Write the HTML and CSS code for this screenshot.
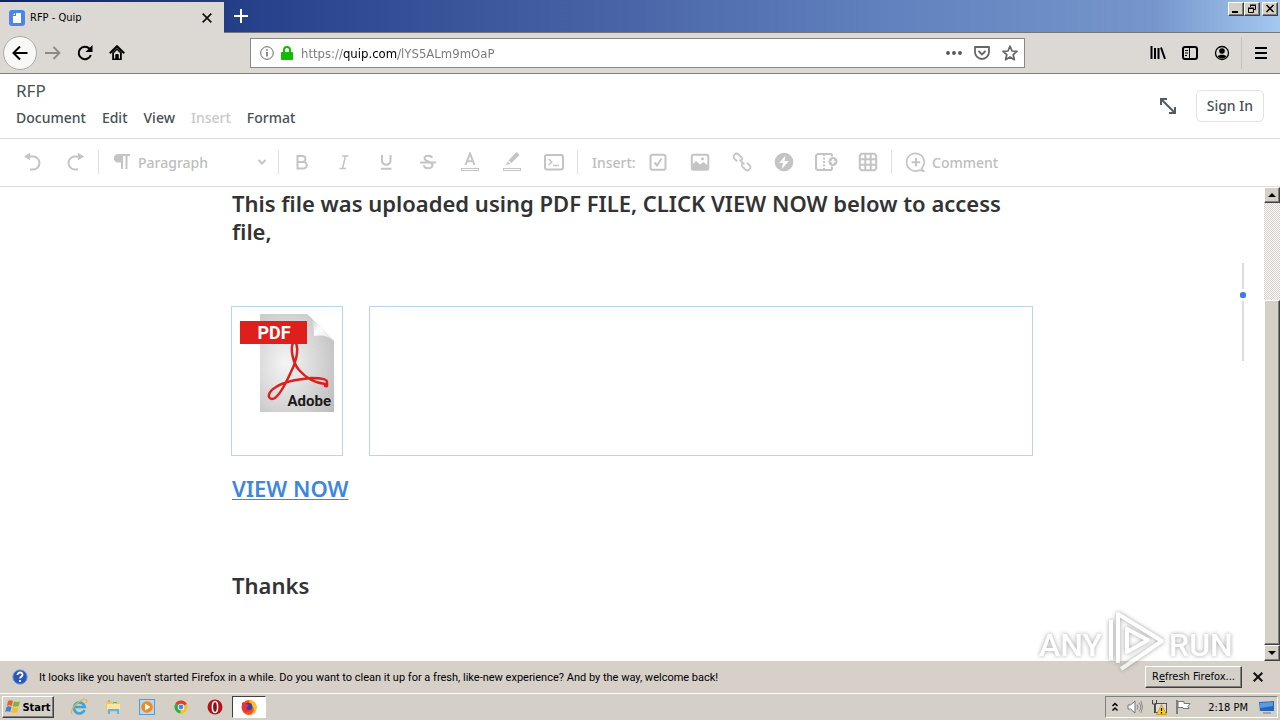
FILE: index.html
```html
<!DOCTYPE html>
<html lang="en">
<head>
    <meta charset="UTF-8">
    <meta name="viewport" content="width=device-width, initial-scale=1.0">
    <title>RFP - Quip</title>
    <link rel="stylesheet" href="styles.css">
</head>
<body>
    <header class="titlebar">
        <div class="tab">
            <svg width="16" height="16" viewBox="0 0 16 16"><rect width="16" height="16" rx="3" fill="#4a86e8"/><path d="M7 3h5v10H4V6h3z" fill="#fff"/><path d="M4 5l2-2v2z" fill="#fff"/></svg>
            <span class="tab-title">RFP - Quip</span>
            <button class="plain" aria-label="Close tab"><svg width="10" height="10" viewBox="0 0 10 10"><path d="M.7.7l8.6 8.6M9.300.7L.7 9.300" stroke="#111" stroke-width="1.700"/></svg></button>
        </div>
        <button class="plain new-tab" aria-label="New tab"><svg width="14" height="14" viewBox="0 0 14 14"><path d="M7 0v14M0 7h14" stroke="#fff" stroke-width="2"/></svg></button>
        <div class="window-buttons">
            <button aria-label="Minimize"><svg width="10" height="10" viewBox="0 0 10 10"><path d="M1 8h6" stroke="#000" stroke-width="2"/></svg></button>
            <button aria-label="Restore"><svg width="10" height="10" viewBox="0 0 10 10"><path d="M3.500 3V1.500h5v4H7M3 1h6M1.500 4.500h5v4h-5zM1 4h6" fill="none" stroke="#000"/></svg></button>
            <button class="win-close" aria-label="Close"><svg width="10" height="10" viewBox="0 0 10 10"><path d="M1.500 1l7 7M8.500 1l-7 7" stroke="#000" stroke-width="1.500"/></svg></button>
        </div>
    </header>

    <nav class="navbar">
        <div class="nav-buttons">
            <button class="plain back" aria-label="Back"><svg width="16" height="16" viewBox="0 0 16 16"><path d="M15.500 8H1.500M8 1.500L1.500 8 8 14.500" fill="none" stroke="#000" stroke-width="2"/></svg></button>
            <button class="plain" aria-label="Forward"><svg width="16" height="16" viewBox="0 0 16 16"><path d="M0 8h14.500M8.500 2l6 6-6 6" fill="none" stroke="#8c8a87" stroke-width="1.800"/></svg></button>
            <button class="plain" aria-label="Reload"><svg width="16" height="16" viewBox="0 0 16 16"><path d="M13.800 10A6.200 6.200 0 1 1 12.500 3.800" fill="none" stroke="#000" stroke-width="2"/><path d="M15.500 0v7H8.500z"/></svg></button>
            <button class="plain" aria-label="Home"><svg width="16" height="16" viewBox="0 0 16 16"><path d="M.8 8.300L8 1.200l7.200 7.100" fill="none" stroke="#000" stroke-width="2"/><path d="M3.200 7.500V15h9.600V7.500L8 3z"/><path d="M5 8l3-3 3 3v5.500H9.500V10h-3v3.500H5z" fill="#dcd9d4"/><path d="M6.500 9h3v4.500h-3z"/></svg></button>
        </div>
        <div class="urlbar">
            <svg width="14" height="14" viewBox="0 0 14 14"><circle cx="7" cy="7" r="6.300" fill="none" stroke="#666"/><path d="M7 6v4.500M7 3.200v1.600" stroke="#666" stroke-width="1.500"/></svg>
            <svg width="12" height="14" viewBox="0 0 12 14"><path d="M3 7V4a3 3 0 0 1 6 0v3" fill="none" stroke="#12bc00" stroke-width="2"/><rect y="6" width="12" height="8" rx="1" fill="#12bc00"/></svg>
            <input type="text" aria-label="Address" value="https://quip.com/lYS5ALm9mOaP">
            <button class="plain" aria-label="Page actions"><svg width="16" height="16" viewBox="0 0 16 16"><g fill="#555"><circle cx="2" cy="8" r="1.900"/><circle cx="8" cy="8" r="1.900"/><circle cx="14" cy="8" r="1.900"/></g></svg></button>
            <button class="plain" aria-label="Save to Pocket"><svg width="16" height="16" viewBox="0 0 16 16"><path d="M1 2h14v5a7 7 0 0 1-14 0z" fill="none" stroke="#666" stroke-width="1.800" stroke-linejoin="round"/><path d="M4.500 6L8 9.500 11.500 6" fill="none" stroke="#666" stroke-width="1.800"/></svg></button>
            <button class="plain" aria-label="Bookmark"><svg width="16" height="16" viewBox="0 0 16 16"><path d="M8 1.200l2 4.800 5 .4-3.800 3.300 1.200 5L8 12l-4.400 2.700 1.200-5L1 6.400 6 6z" fill="none" stroke="#666" stroke-width="1.700" stroke-linejoin="round"/></svg></button>
        </div>
        <div class="nav-tools">
            <button class="plain" aria-label="Library"><svg width="16" height="16" viewBox="0 0 16 16"><path d="M1.500 1v13M5 3v11M8.500 3v11M11 2.500L15 14" stroke="#000" stroke-width="2"/></svg></button>
            <button class="plain" aria-label="Sidebars"><svg width="16" height="16" viewBox="0 0 16 16"><rect x="1" y="2" width="14" height="12" rx="2" fill="none" stroke="#000" stroke-width="2"/><path d="M7.500 2v12M3 5.500h3M3 8h3M3 10.500h2" stroke="#000"/></svg></button>
            <button class="plain" aria-label="Account"><svg width="16" height="16" viewBox="0 0 16 16"><circle cx="8" cy="8" r="6.500" fill="none" stroke="#000" stroke-width="1.300"/><circle cx="8" cy="6" r="2.800"/><path d="M3.500 11.500C5 9 11 9 12.500 11.500 10 14 6 14 3.500 11.500z"/></svg></button>
            <button class="plain menu" aria-label="Menu"><svg width="14" height="14" viewBox="0 0 14 14"><path d="M1 2h12M1 7h12M1 12h12" stroke="#000" stroke-width="2"/></svg></button>
        </div>
    </nav>

    <header class="doc-header">
        <div>
            <h1>RFP</h1>
            <div class="menus">
                <button class="plain">Document</button>
                <button class="plain">Edit</button>
                <button class="plain">View</button>
                <button class="plain" disabled>Insert</button>
                <button class="plain">Format</button>
            </div>
        </div>
        <div class="header-actions">
            <button class="plain" aria-label="Expand"><svg width="18" height="18" viewBox="0 0 18 18"><path d="M2 8V2h6M2 2l14 14M10 16h6v-6" fill="none" stroke="#555b61" stroke-width="2"/></svg></button>
            <button class="sign-in">Sign In</button>
        </div>
    </header>

    <div class="toolbar">
        <button class="tool" aria-label="Undo"><svg viewBox="0 0 20 20"><path d="M5 4.500h5a6 6 0 0 1 0 13H7" fill="none"/><path d="M7 .8v7.400L1 4.500z" class="solid"/></svg></button>
        <button class="tool" aria-label="Redo"><svg viewBox="0 0 20 20"><path d="M15 4.500h-5a6 6 0 0 0 0 13h3" fill="none"/><path d="M13 .8v7.400l6-3.700z" class="solid"/></svg></button>
        <span class="sep"></span>
        <label class="style-picker">
            <svg viewBox="0 0 20 20"><path d="M9 3h9M10 3v14M14.500 3v14" fill="none"/><path d="M10 2H6a4.200 4.200 0 0 0 0 8.500h4z" class="solid"/></svg>
            <select aria-label="Paragraph style"><option>Paragraph</option></select>
            <svg class="chevron" viewBox="0 0 10 10"><path d="M1.500 3L5 6.500 8.500 3" fill="none"/></svg>
        </label>
        <span class="sep"></span>
        <button class="tool" aria-label="Bold"><svg viewBox="0 0 20 20"><path d="M5.500 4h5a3 3 0 0 1 0 6h-5zM5.500 10h6a3.200 3.200 0 0 1 0 6.500h-6z" fill="none"/></svg></button>
        <button class="tool" aria-label="Italic"><svg viewBox="0 0 20 20"><path d="M8 4h6.500M5.500 16.500H12M11.500 4l-3 12.500" fill="none" stroke-width="1.500"/></svg></button>
        <button class="tool" aria-label="Underline"><svg viewBox="0 0 20 20"><path d="M6 3v6a4.300 4.300 0 0 0 8.500 0V3M5 16.800h10.500" fill="none"/></svg></button>
        <button class="tool" aria-label="Strikethrough"><svg viewBox="0 0 20 20"><path d="M14 6c-.5-3-7.500-3.300-7.500.2C6.500 10 14.500 9 14.500 13c0 4.500-8.500 4-8.500.2M2 10.500h16" fill="none"/></svg></button>
        <button class="tool" aria-label="Text color"><svg viewBox="0 0 20 20"><path d="M5.500 13L10 1.500 14.500 13M7 9.300h6" fill="none"/><rect x="1.500" y="16.500" width="17" height="2" fill="none" class="thin"/></svg></button>
        <button class="tool" aria-label="Highlight"><svg viewBox="0 0 20 20"><path d="M6.500 8.500L14.500 0l3 3L9.500 11zM6 9.500L8.500 12 3.500 13z" class="solid"/><rect x="1.500" y="16.500" width="17" height="2" fill="none" class="thin"/></svg></button>
        <button class="tool" aria-label="Code"><svg viewBox="0 0 20 20"><rect x="1" y="3" width="18" height="14.500" rx="2" fill="none"/><path d="M4.500 7l3.300 3-3.300 3M9 13.500h6" fill="none" stroke-width="1.500"/></svg></button>
        <span class="sep"></span>
        <span class="tool-label">Insert:</span>
        <button class="tool" aria-label="Checklist"><svg viewBox="0 0 20 20"><rect x="2.500" y="2.800" width="15" height="15" rx="2" fill="none"/><path d="M6.500 10.500l2.500 3 4.500-7" fill="none"/></svg></button>
        <button class="tool" aria-label="Image"><svg viewBox="0 0 20 20"><rect x="1.800" y="2.800" width="16.500" height="15" rx="1.500" fill="none"/><path d="M2 13l4-4 4 3.500 3.500-2.500 5 4v3.500H2z" class="solid"/><circle cx="12.500" cy="6.800" r="1.500" class="solid"/></svg></button>
        <button class="tool" aria-label="Link"><svg viewBox="0 0 20 20"><g transform="rotate(45 10 10)" fill="none"><path d="M6 13H2.500a3 3 0 0 1-3-3 3 3 0 0 1 3-3H6a3 3 0 0 1 2.800 2M14 7h3.500a3 3 0 0 1 3 3 3 3 0 0 1-3 3H14a3 3 0 0 1-2.800-2M6.500 10h7" class="chain"/></g></svg></button>
        <button class="tool" aria-label="Live app"><svg viewBox="0 0 20 20"><circle cx="10" cy="10" r="9.300" class="solid"/><path d="M11.500 3.500L5 11h4l-1.200 6L15 9h-4.500z" fill="#fff" stroke="none"/></svg></button>
        <button class="tool wide" aria-label="Column"><svg viewBox="0 0 24 20"><path d="M18 4.500V3L17 2H3.500L2 3.500v13L3.500 18H17l1-1v-2.500" fill="none"/><path d="M10 2v16" fill="none" stroke-dasharray="2 1.500"/><circle cx="19" cy="9.500" r="4.500" class="solid"/><path d="M16.500 9.500h5M19 7v5" class="plus"/></svg></button>
        <button class="tool" aria-label="Spreadsheet"><svg viewBox="0 0 20 20"><path d="M3.500 1.800h13l1.700 1.700v13l-1.700 1.700h-13l-1.700-1.700v-13zM7.300 2v16M12.700 2v16M2 7.300h16M2 12.700h16" fill="none"/></svg></button>
        <span class="sep"></span>
        <button class="comment"><svg viewBox="0 0 20 20"><path d="M15.500 16.500A8.800 8.800 0 1 0 13 18.200l4.500.8z" fill="none" stroke-width="1.700"/><path d="M10 6v8.500M5.700 10.200h8.600" fill="none"/></svg>Comment</button>
    </div>

    <div class="viewport">
        <main>
            <article>
                <p>This file was uploaded using PDF FILE, CLICK VIEW NOW below to access file,</p>
                <div class="images">
                    <figure class="pdf">
                        <svg width="96" height="100" viewBox="0 0 96 100" role="img" aria-label="Adobe PDF">
                            <defs>
                                <radialGradient id="paper" cx=".35" cy=".5" r=".8"><stop offset="0" stop-color="#f5f5f5"/><stop offset="1" stop-color="#bcbcbc"/></radialGradient>
                                <linearGradient id="fold" x2="1" y1="0" y2="1"><stop offset="0" stop-color="#aaa"/><stop offset=".5" stop-color="#fff"/><stop offset="1" stop-color="#ddd"/></linearGradient>
                            </defs>
                            <path d="M21 1h47l27 27v71H21z" fill="url(#paper)"/>
                            <path d="M68 1l27 27c-7-6-14-6-20-5 0-9-1-16-7-22z" fill="url(#fold)"/>
                            <path d="M54 30c-3 6 0 20 6 27 7 8 17 13 26 14 3 1 2 3 0 2M57 30c3 7 0 20-6 31-5 11-12 25-18 25-6-1-3-8 4-12 9-6 24-8 35-9 8 0 16 1 16 4v4" fill="none" stroke="#df1f1c" stroke-width="2.500" stroke-linejoin="round" stroke-linecap="round"/>
                            <rect x="1" y="8" width="67" height="23" fill="#df1f1c"/>
                            <text x="35" y="26" text-anchor="middle" class="pdf-tag">PDF</text>
                            <text x="92" y="93" text-anchor="end" class="pdf-brand">Adobe</text>
                        </svg>
                    </figure>
                    <figure class="blank"></figure>
                </div>
                <p class="view"><a href="#">VIEW NOW</a></p>
                <p>Thanks</p>
            </article>
            <div class="outline"><i></i></div>
        </main>
        <div class="scrollbar">
            <button aria-label="Scroll up"><svg width="8" height="4" viewBox="0 0 8 4"><path d="M4 0l4 4H0z"/></svg></button>
            <div class="track"><div class="thumb"></div></div>
            <button aria-label="Scroll down"><svg width="8" height="4" viewBox="0 0 8 4"><path d="M0 0h8L4 4z"/></svg></button>
        </div>
    </div>

    <div class="notification">
        <svg width="16" height="16" viewBox="0 0 16 16"><circle cx="8" cy="8" r="7.300" fill="#2858b8" stroke="#8ca8d8"/><path d="M5.500 6c0-3.500 5.500-3.200 5 0-.3 1.700-2.500 1.800-2.500 3.500M8 11v2" fill="none" stroke="#fff" stroke-width="1.800"/></svg>
        <span class="message">It looks like you haven't started Firefox in a while. Do you want to clean it up for a fresh, like-new experience? And by the way, welcome back!</span>
        <button class="refresh">R<u>e</u>fresh Firefox...</button>
        <button class="plain" aria-label="Dismiss"><svg width="10" height="10" viewBox="0 0 10 10"><path d="M.7.7l8.600 8.600M9.300.7L.7 9.300" stroke="#111" stroke-width="2"/></svg></button>
    </div>

    <footer class="taskbar">
        <button class="start"><svg width="16" height="16" viewBox="0 0 16 16"><path d="M3 2c2-1 3-1 5 0L6.800 7c-2-1-3-1-5 0z" fill="#e8602c"/><path d="M9 2.300c2 1 4 1 6 0L13.700 7c-2 1-4 1-6 .3z" fill="#7db73a"/><path d="M1.500 8c2-1 3-1 5 0l-1.300 5c-2-1-3-1-5 0z" fill="#3d7fd0"/><path d="M7.500 8.300c2 1 4 1 6 0l-1.300 5c-2 1-4 1-6 0z" fill="#f5bd27"/></svg>Start</button>
        <div class="launchers">
            <button class="plain" aria-label="Internet Explorer"><svg width="18" height="18" viewBox="0 0 18 18"><path d="M14.500 12a5.500 5.500 0 1 1 .3-3H5" fill="none" stroke="#39a7dc" stroke-width="2.700"/><path d="M2 16C-1 11 12-1 16.500 2c1 1 .5 2-.5 3" fill="none" stroke="#e5b93c" stroke-width="1.300"/></svg></button>
            <button class="plain" aria-label="Explorer"><svg width="18" height="18" viewBox="0 0 18 18"><path d="M2 3h5l1 1h7v10H2z" fill="#e8cb68"/><path d="M3 6h13v6H3z" fill="#f7e7a4"/><path d="M4 16v-5h11v5h-2v-3H6v3z" fill="#63b2dc"/><path d="M4 3h2M9 4.500h4" stroke="#64ad6c"/></svg></button>
            <button class="plain" aria-label="Media Player"><svg width="18" height="18" viewBox="0 0 18 18"><rect x="1.500" y="1.500" width="15" height="15" fill="#b8d8f0" stroke="#5b9bd0"/><circle cx="9" cy="9" r="5.800" fill="#f08a1d"/><path d="M7 5.500l5.500 3.500L7 12.500z" fill="#fff"/></svg></button>
            <button class="plain" aria-label="Chrome"><svg width="18" height="18" viewBox="0 0 18 18"><circle cx="9" cy="9" r="6.500" fill="#fbc116"/><path d="M9 9L3.400 5.700A6.500 6.500 0 0 1 14.800 6z" fill="#e33b2e"/><path d="M9 9L3.400 5.700a6.500 6.500 0 0 0 4.800 9.700z" fill="#2da94f"/><circle cx="9" cy="9" r="3.200" fill="#fff"/><circle cx="9" cy="9" r="2.400" fill="#4285f4"/></svg></button>
            <button class="plain" aria-label="Opera"><svg width="18" height="18" viewBox="0 0 18 18"><circle cx="9" cy="9" r="7.500" fill="#b5121b"/><ellipse cx="9" cy="9" rx="2.600" ry="5.500" fill="#8a0b12" stroke="#fff" stroke-width="1.500"/></svg></button>
            <button class="running" aria-label="Firefox"><svg width="18" height="18" viewBox="0 0 18 18"><circle cx="9" cy="9.500" r="7.500" fill="#f6511d"/><path d="M9 2c4 0 8 3 7.500 8 0 4-4 7-7.500 7 5-2 6-6 3-9-2-2-3-3-3-6z" fill="#ffbd2e"/><circle cx="8.500" cy="8.500" r="3.800" fill="#3a3ea8"/><path d="M2 5c2-1 4 0 5 1.500l2 .5-2 2c-1 2 1 4 4 3-2 3-8 3-9-2z" fill="#e8313f"/></svg></button>
        </div>
        <div class="tray">
            <button class="plain" aria-label="Show hidden icons"><svg width="8" height="10" viewBox="0 0 8 10"><path d="M1.500 4L4 1.500 6.500 4M1.500 8.500L4 6l2.500 2.500" fill="none" stroke="#000" stroke-width="1.500"/></svg></button>
            <svg width="16" height="16" viewBox="0 0 16 16"><path d="M1 6h2.500L8 2v12L3.500 10H1z" fill="#fff" stroke="#777"/><path d="M10 5.500q2 2.500 0 5M12 3.500q3.500 4.500 0 9M14 2q3 6 0 12" fill="none" stroke="#888"/></svg>
            <svg width="16" height="16" viewBox="0 0 16 16"><rect x="4.500" y="4.500" width="11" height="9" fill="#ddd" stroke="#555"/><path d="M1.500 1v4h4V1M3.500 5v9" fill="none" stroke="#444"/><path d="M10.500 5.500l5 10h-10z" fill="#ffcc18" stroke="#b08000" stroke-width=".6"/><path d="M10.500 9v3M10.500 13v1.500" stroke="#000" stroke-width="1.200"/></svg>
            <svg width="16" height="16" viewBox="0 0 16 16"><path d="M2 1v14" stroke="#666" stroke-width="1.500"/><path d="M3 2.500h6v2h6l-2 3 1 2H8v-1H3z" fill="#fff" stroke="#777"/></svg>
            <time>2:18 PM</time>
            <svg width="16" height="14" viewBox="0 0 16 14"><path d="M0 2l15-1v10H1z" fill="#2865b8"/><path d="M1 3l13-1v4L1 8z" fill="#5a9be0"/><path d="M4 13h8" stroke="#777"/></svg>
        </div>
    </footer>

    <svg class="watermark" width="200" height="66" viewBox="0 0 200 66" role="img" aria-label="ANY RUN">
        <text x="1" y="48">ANY</text>
        <text x="131" y="48">RUN</text>
        <path d="M73 12v40M80 55V6l44 27-41 28M89 21v23l21-12z"/>
    </svg>
</body>
</html>
```
FILE: styles.css
```css
* {
    box-sizing: border-box;
}
body {
    margin: 0;
    height: 100vh;
    display: flex;
    flex-direction: column;
    overflow: hidden;
    position: relative;
    font-family: "DejaVu Sans Condensed", "DejaVu Sans", sans-serif;
    font-size: 11px;
    color: #000;
    background: #fff;
}
button, input, select {
    font: inherit;
    color: inherit;
}
button {
    display: flex;
    align-items: center;
    justify-content: center;
    padding: 0;
}
.plain {
    border: none;
    background: none;
}

/* browser window */
.titlebar {
    display: flex;
    flex: none;
    height: 33px;
    background: linear-gradient(to right, #0c246c, #27428a 20%, #4560a3 45%, #6282bf 70%, #7595cb 90%, #a4c8f0);
    border-bottom: 1px solid #777;
}
.tab {
    display: flex;
    align-items: center;
    gap: 5px;
    width: 224px;
    height: 31px;
    margin-top: 2px;
    padding: 0 12px 0 9px;
    background: #dcd9d4;
}
.tab-title {
    flex: 1;
}
.new-tab {
    width: 34px;
}
.window-buttons {
    display: flex;
    margin: 2px 2px 0 auto;
}
.window-buttons button {
    width: 16px;
    height: 14px;
}
.window-buttons .win-close {
    margin-left: 2px;
}
.window-buttons button, .scrollbar button, .thumb, .refresh, .start {
    background: #d4d0c8;
    border: 1px solid;
    border-color: #fff #404040 #404040 #fff;
    box-shadow: inset -1px -1px #808080;
}
.navbar {
    display: flex;
    align-items: center;
    flex: none;
    height: 41px;
    background: #dcd9d4;
    border-bottom: 1px solid #808080;
}
.nav-buttons {
    display: flex;
    align-items: center;
    flex: 0 0 250px;
}
.nav-buttons button {
    width: 32px;
    height: 32px;
}
.nav-buttons .back {
    width: 34px;
    height: 34px;
    margin: 0 0 0 3px;
    border: 1px solid #aaa;
    border-radius: 50%;
    background: #f8f8f7;
}
.urlbar {
    display: flex;
    align-items: center;
    flex: 0 1 775px;
    gap: 7px;
    height: 30px;
    padding: 0 4px 0 9px;
    background: #fff;
    border: 1px solid #888;
}
.urlbar input {
    flex: 1;
    min-width: 0;
    padding: 0 0 0 1px;
    border: none;
    outline: none;
    font-size: 13px;
    color: transparent;
    background: linear-gradient(to right, #777 43px, #000 43px, #000 98px, #777 98px);
    -webkit-background-clip: text;
    background-clip: text;
}
.urlbar button {
    width: 21px;
}
.nav-tools {
    display: flex;
    margin-left: auto;
}
.nav-tools button {
    width: 32px;
    height: 32px;
}
.nav-tools .menu {
    width: 39px;
    margin-left: 3px;
    border-left: 1px solid #c5c2bd;
}

/* document chrome */
.doc-header, .toolbar, .viewport {
    font-family: "Noto Sans", sans-serif;
    background: #fff;
}
.doc-header {
    display: flex;
    justify-content: space-between;
    flex: none;
    height: 65px;
    padding: 0 16px;
    border-bottom: 1px solid #ddd;
    color: #494f56;
}
h1 {
    margin: 6px 0 5px;
    font-size: 17px;
    line-height: 22px;
    font-weight: 400;
}
.menus {
    display: flex;
    gap: 16px;
    font-size: 14px;
    line-height: 22px;
    font-weight: 500;
}
.menus button:disabled {
    color: #c8c8c8;
}
.header-actions {
    display: flex;
    align-items: center;
    gap: 19px;
}
.sign-in {
    height: 32px;
    padding: 0 10px 2px;
    font-size: 14px;
    font-weight: 500;
    color: #494f56;
    background: #fff;
    border: 1px solid #e2e2e2;
    border-radius: 5px;
}
.toolbar {
    display: flex;
    align-items: center;
    flex: none;
    height: 48px;
    padding: 0 0 1px 12px;
    border-bottom: 1px solid #ddd;
    font-size: 14px;
    font-weight: 500;
    color: #bdbdbd;
}
.toolbar svg {
    width: 20px;
    height: 20px;
    stroke: #c4c4c4;
    stroke-width: 2;
}
.toolbar .wide svg {
    width: 24px;
}
.toolbar .solid {
    fill: #c4c4c4;
    stroke: none;
}
.toolbar .thin {
    stroke-width: 1;
}
.toolbar .chain {
    stroke-width: 1.7;
}
.toolbar .plus {
    stroke: #fff;
    stroke-width: 1.5;
}
.tool {
    width: 42px;
    height: 32px;
    border: none;
    background: none;
}
.sep {
    width: 1px;
    height: 24px;
    margin: 0 2px;
    background: #e0e0e0;
}
.style-picker {
    display: flex;
    align-items: center;
    gap: 6px;
    width: 175px;
    padding: 0 9px 0 11px;
}
.style-picker select {
    flex: 1;
    padding: 0;
    border: none;
    appearance: none;
    background: none;
}
.style-picker .chevron {
    width: 10px;
    height: 10px;
}
.tool-label {
    width: 57px;
    padding-left: 12px;
}
.comment {
    gap: 6px;
    margin-left: 12px;
    border: none;
    background: none;
}

/* document */
.viewport {
    display: flex;
    flex: 1;
    min-height: 0;
}
main {
    flex: 1;
    position: relative;
    overflow: hidden;
}
article {
    max-width: 802px;
    margin: 0 auto;
    padding-top: 2px;
    color: #333;
    font-size: 22px;
    line-height: 28px;
    font-weight: 600;
}
article p {
    margin: 0 1px;
}
.images {
    display: flex;
    gap: 26px;
    margin: 61px 0 18px;
}
figure {
    margin: 0;
    height: 150px;
    border: 1px solid #bcd3ec;
}
.pdf {
    width: 112px;
    padding: 6px 7px;
}
.blank {
    flex: 1;
}
.pdf-tag, .pdf-brand {
    font-family: Roboto, sans-serif;
    font-weight: 700;
}
.pdf-tag {
    font-size: 18px;
    fill: #fff;
}
.pdf-brand {
    font-size: 15px;
    fill: #1a1a1a;
}
article .view {
    margin-bottom: 69px;
}
article a {
    color: #3d86e0;
    text-decoration-thickness: 1px;
    text-underline-offset: 2px;
}
.outline {
    position: absolute;
    top: 76px;
    right: 20px;
    width: 2px;
    height: 98px;
    background: #ddd;
}
.outline i {
    position: absolute;
    top: 26px;
    left: -4px;
    width: 10px;
    height: 12px;
    border: solid #fff;
    border-width: 3px 2px;
    background: #3d7be8;
    border-radius: 5px;
}
.scrollbar {
    display: flex;
    flex-direction: column;
    width: 16px;
}
.scrollbar button {
    height: 16px;
}
.track {
    display: flex;
    flex-direction: column;
    justify-content: flex-end;
    flex: 1;
    background: repeating-conic-gradient(#d4d0c8 0 25%, #fff 0 50%) 0 0 / 2px 2px;
}
.thumb {
    height: 78%;
}

/* bottom bars */
.notification {
    display: flex;
    align-items: center;
    flex: none;
    height: 32px;
    padding: 0 17px 0 12px;
    background: #d6d0c9;
}
.message {
    flex: 1;
    margin-left: 11px;
    font-family: Roboto, sans-serif;
}
.refresh {
    height: 22px;
    margin-right: 11px;
    padding: 0 6px 2px;
}
.taskbar {
    display: flex;
    align-items: center;
    flex: none;
    height: 27px;
    padding: 0 2px;
    background: #d4d0c8;
    border-top: 1px solid #fff;
}
.start {
    gap: 1px;
    width: 52px;
    height: 22px;
    font-weight: 700;
}
.launchers {
    display: flex;
    margin-left: 8px;
}
.launchers button {
    width: 34px;
    height: 22px;
}
.launchers .running {
    background: #fff;
    border: 1px solid;
    border-color: #404040 #fff #fff #404040;
}
.tray {
    display: flex;
    align-items: center;
    gap: 8px;
    height: 22px;
    margin-left: auto;
    padding: 0 2px 0 5px;
    border: 1px solid;
    border-color: #808080 #fff #fff #808080;
}
time {
    margin: 0 3px 0 9px;
}
.watermark {
    position: absolute;
    right: 42px;
    bottom: 46px;
    fill: #fff;
    stroke: #fff;
    filter: drop-shadow(0 0 2px #777);
    opacity: 0.7;
    pointer-events: none;
}
.watermark text {
    font: 500 32px Roboto, sans-serif;
    stroke: none;
}
.watermark path {
    fill: none;
    stroke-width: 4;
    stroke-linejoin: round;
}
```
